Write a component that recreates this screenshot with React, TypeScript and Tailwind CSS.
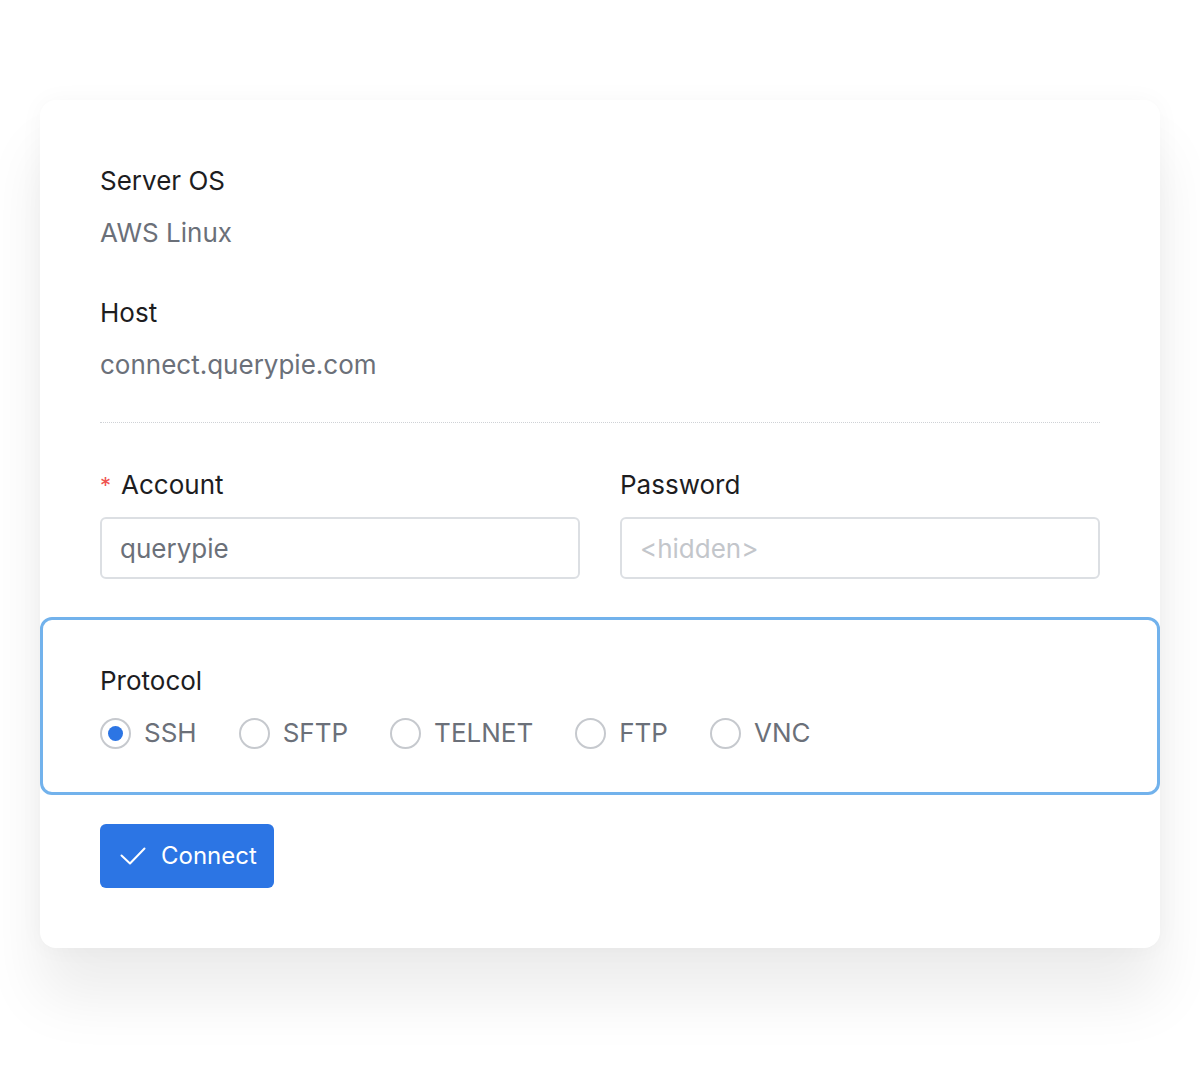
import { useState } from "react";

const protocols = ["SSH", "SFTP", "TELNET", "FTP", "VNC"];

function Field({ label, value }: { label: string; value: string }) {
  return (
    <div className="flex flex-col gap-5">
      <div className="text-[26px] leading-8 text-[#1d1d1f]">{label}</div>
      <div className="text-[26px] leading-8 text-[#6b7079]">{value}</div>
    </div>
  );
}

export default function App() {
  const [protocol, setProtocol] = useState("SSH");

  return (
    <div
      className="min-h-[1080px] bg-white px-[40px] pt-[100px]"
      style={{ fontFamily: "Inter, 'Noto Sans', sans-serif" }}
    >
      <div className="flex w-[1120px] flex-col rounded-[16px] bg-white px-[60px] pb-[60px] pt-[65px] shadow-[0_50px_60px_rgba(0,0,0,0.075),0_0_24px_rgba(0,0,0,0.035)]">
        <div className="flex flex-col gap-12">
          <Field label="Server OS" value="AWS Linux" />
          <Field label="Host" value="connect.querypie.com" />
        </div>

        <div className="mt-[41px] border-t border-dotted border-[#cfd2d6]" />

        <div className="mt-[46px] grid grid-cols-2 gap-10">
          <div className="flex flex-col gap-4">
            <div className="flex items-center text-[26px] leading-8 text-[#1d1d1f]">
              <span className="mr-[10px] text-[22px] text-[#ef5350]">*</span>
              Account
            </div>
            <input
              defaultValue="querypie"
              className="h-[62px] rounded-[6px] border-2 border-[#dcdfe3] px-[18px] text-[26px] text-[#6b7079] outline-none"
            />
          </div>
          <div className="flex flex-col gap-4">
            <div className="text-[26px] leading-8 text-[#1d1d1f]">Password</div>
            <input
              placeholder="<hidden>"
              className="h-[62px] rounded-[6px] border-2 border-[#dcdfe3] px-[18px] text-[26px] text-[#6b7079] outline-none placeholder:text-[#c3c6cb]"
            />
          </div>
        </div>

        <div className="-mx-[60px] mt-[38px] flex flex-col gap-5 rounded-[12px] border-[3px] border-[#72b2ec] px-[57px] pb-[43px] pt-[45px]">
          <div className="text-[26px] leading-8 text-[#1d1d1f]">Protocol</div>
          <div className="flex items-center gap-[42px]">
            {protocols.map((p) => (
              <label
                key={p}
                onClick={() => setProtocol(p)}
                className="flex cursor-pointer items-center gap-[13px] text-[26px] leading-8 text-[#6b7079]"
              >
                <span className="flex h-[31px] w-[31px] items-center justify-center rounded-full border-2 border-[#c6c9ce] bg-white">
                  {protocol === p && <span className="h-[15px] w-[15px] rounded-full bg-[#2c75e4]" />}
                </span>
                {p}
              </label>
            ))}
          </div>
        </div>

        <div className="mt-[29px]">
          <button
            type="button"
            className="flex h-[64px] items-center gap-[15px] rounded-[6px] bg-[#2c75e4] pl-[20px] pr-[17px] text-[24px] text-white"
          >
            <svg width="26" height="20" viewBox="0 0 26 20" fill="none">
              <polyline points="1.5,9.5 10,17.5 24.5,2.5" stroke="white" strokeWidth="2" strokeLinecap="round" strokeLinejoin="round" />
            </svg>
            Connect
          </button>
        </div>
      </div>
    </div>
  );
}
